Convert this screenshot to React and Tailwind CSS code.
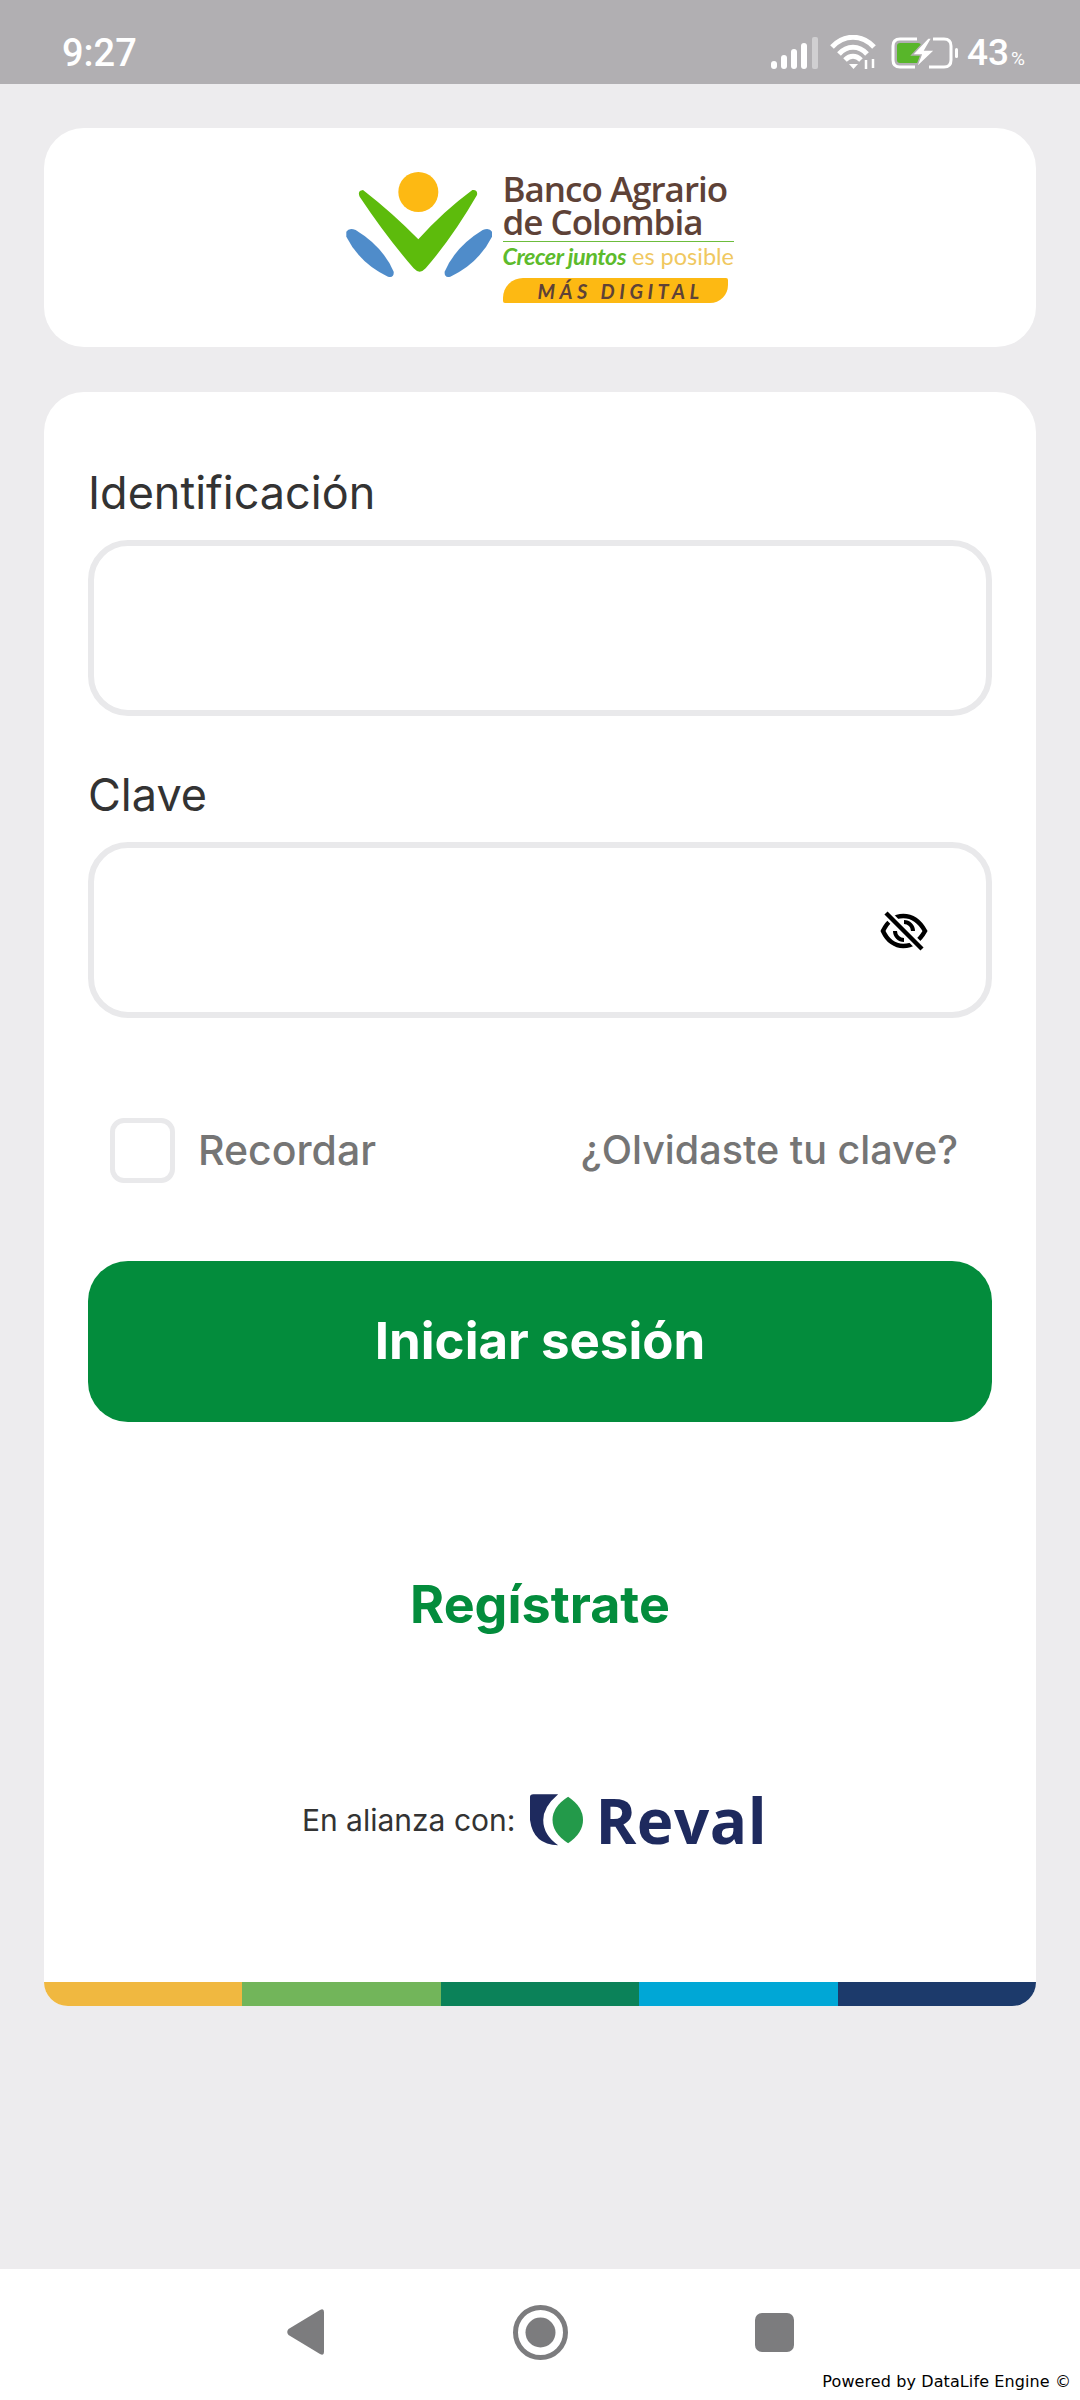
import { useState } from "react";

const STRIPES = ["bg-[#f0b840]", "bg-[#72b55a]", "bg-[#0b8259]", "bg-[#00a7d6]", "bg-[#1c3a6b]"];

function StatusIcons() {
  return (
    <div className="flex items-center">
      {/* signal */}
      <svg width="47" height="32" viewBox="0 0 47 32" fill="#fff" className="mr-[12px]">
        <rect x="0" y="24" width="6" height="8" rx="3" />
        <rect x="10" y="18" width="6" height="14" rx="3" />
        <rect x="20" y="12" width="6" height="20" rx="3" />
        <rect x="30" y="6" width="6" height="26" rx="3" />
        <rect x="41" y="0" width="6" height="32" rx="2" fill="#d0cfd1" />
      </svg>
      {/* wifi */}
      <svg width="48" height="35" viewBox="0 0 48 35" fill="none" stroke="#fff" strokeWidth="5" className="mr-[13px]">
        <path d="M2 12 C14 -1 32 -1 44 12" />
        <path d="M9 19 C17 10 29 10 37 19" />
        <path d="M15 25 C20 20 26 20 31 25" />
        <path d="M19 29 L23.500 34 L28 29 Z" fill="#fff" stroke="none" />
        <path d="M36 25 V34 M43 24 V33" strokeWidth="2.500" />
      </svg>
      {/* battery */}
      <svg width="68" height="32" viewBox="0 0 68 32" fill="none" className="mr-[8px]">
        <path d="M26 2 H9 Q2 2 2 9 V23 Q2 30 9 30 H24 M38 30 H53 Q60 30 60 23 V9 Q60 2 53 2 H42" stroke="#fff" strokeWidth="3" />
        <rect x="6" y="6" width="24" height="20" rx="3" fill="#58b62a" />
        <path d="M37 1 L21 18 H30 L25 31 L44 13 H34 L41 1 Z" fill="#fff" stroke="#b1afb2" strokeWidth="1.500" />
        <rect x="64" y="11" width="3" height="10" rx="1.500" fill="#fff" />
      </svg>
      <span className="font-['Roboto',sans-serif] font-medium text-[37px] leading-none text-white">43</span>
      <span className="font-['Roboto',sans-serif] text-[19px] leading-none text-white mt-[12px] ml-[2px]">%</span>
    </div>
  );
}

function BancoLogo() {
  return (
    <div className="flex items-start">
      <svg width="150" height="110" viewBox="70 60 450 330" className="mt-[-2px] mr-[10px]">
        <circle cx="296" cy="126" r="60" fill="#fdb913" />
        <path d="M130 120 Q220 190 296 268 Q370 185 458 120 Q475 118 472 135 Q400 260 318 355 Q300 375 282 355 Q200 260 120 140 Q112 122 130 120Z" fill="#5dbb0c" />
        <path d="M80 245 Q88 232 108 240 Q190 290 222 365 Q224 385 205 380 Q120 340 80 260Z" fill="#4f8cca" />
        <path d="M517 245 Q509 232 489 240 Q407 290 375 365 Q373 385 392 380 Q477 340 517 260Z" fill="#4f8cca" />
      </svg>
      <div className="flex flex-col w-[235px]">
        <p className="font-['Open_Sans',sans-serif] font-semibold text-[35px] leading-[33px] tracking-[-1px] text-[#5e4237] whitespace-pre-line">
          {"Banco Agrario\nde Colombia"}
        </p>
        <div className="h-[1px] bg-[#6cbd3c] mt-[3px] w-[231px]" />
        <p className="font-['Lato',sans-serif] text-[23.500px] leading-[28px] whitespace-nowrap">
          <span className="font-bold italic text-[#5dbb2c] tracking-[-0.5px]">Crecer juntos</span>{" "}
          <span className="text-[#f0c860]">es posible</span>
        </p>
        <div className="mt-[8px] w-[225px] h-[25px] bg-[#fdb913] rounded-tl-[20px] rounded-br-[18px] rounded-bl-[2px] rounded-tr-[2px] flex items-center pl-[35px]">
          <span className="font-['Lato',sans-serif] font-bold italic text-[20px] leading-none tracking-[4.500px] text-[#5e4237] whitespace-nowrap">
            MÁS DIGITAL
          </span>
        </div>
      </div>
    </div>
  );
}

function RevalLogo() {
  return (
    <div className="flex items-center">
      <svg width="53" height="52" viewBox="750 72 160 156" className="mr-[12px]">
        <path d="M750 80 Q750 72 760 72 L835 72 Q790 110 790 150 Q790 195 835 226 Q760 225 750 150 Z" fill="#1e2a5e" />
        <path d="M865 80 Q910 110 910 150 Q910 190 865 220 Q818 190 818 150 Q818 110 865 80Z" fill="#239a4a" />
      </svg>
      <span className="font-['Open_Sans',sans-serif] font-bold text-[62px] leading-none tracking-[0.5px] text-[#1e2a5e]">
        Reval
      </span>
    </div>
  );
}

export default function App() {
  const [id, setId] = useState("");
  const [clave, setClave] = useState("");
  const [recordar, setRecordar] = useState(false);

  return (
    <div className="h-[2400px] flex flex-col bg-[#edecee] font-['Inter',sans-serif] relative">
      {/* Status bar */}
      <div className="h-[84px] bg-[#b1afb2] flex items-center justify-between pl-[62px] pr-[55px] pt-[21px]">
        <span className="font-['Roboto',sans-serif] font-medium text-[38px] leading-none text-white">9:27</span>
        <StatusIcons />
      </div>

      <div className="flex-1 px-[44px] pt-[44px]">
        <div className="h-[219px] bg-white rounded-[40px] flex items-center justify-center">
          <BancoLogo />
        </div>

        <div className="mt-[45px] h-[1614px] bg-white rounded-t-[40px] rounded-b-[24px] overflow-hidden flex flex-col">
          <div className="flex-1 px-[44px] pt-[73px]">
            <label className="block h-[56px] mb-[19px] text-[45px] leading-[56px] text-[#333333]">
              Identificación
            </label>
            <input
              value={id}
              onChange={(e) => setId(e.target.value)}
              className="block w-full h-[176px] border-[6px] border-[#e9e9eb] rounded-[40px] px-8 text-[40px] outline-none"
            />

            <label className="block mt-[51px] h-[56px] mb-[19px] text-[45px] leading-[56px] text-[#333333]">
              Clave
            </label>
            <div className="relative">
              <input
                type="password"
                value={clave}
                onChange={(e) => setClave(e.target.value)}
                className="block w-full h-[176px] border-[6px] border-[#e9e9eb] rounded-[40px] px-8 text-[40px] outline-none"
              />
              <svg
                width="48"
                height="42"
                viewBox="0 0 48 42"
                fill="none"
                stroke="#000"
                strokeWidth="4.500"
                className="absolute left-[792px] top-[68px]"
              >
                <path d="M3 21 C12 1 34 1 45 21 C34 41 12 41 3 21 Z" />
                <path d="M24 12 A9 9 0 0 1 33 21 M24 30 A9 9 0 0 1 15 21" strokeWidth="4" />
                <path d="M6 3 L42 39" stroke="#fff" strokeWidth="9" />
                <path d="M6 3 L42 39" strokeWidth="4.500" />
              </svg>
            </div>

            <div className="mt-[100px] h-[65px] flex items-center justify-between pl-[22px] pr-[34px]">
              <label className="flex items-center gap-[23px]">
                <input
                  type="checkbox"
                  checked={recordar}
                  onChange={(e) => setRecordar(e.target.checked)}
                  className="appearance-none w-[65px] h-[65px] border-[5px] border-[#e9e9eb] rounded-[14px]"
                />
                <span className="text-[41px] font-medium text-[#757575]">Recordar</span>
              </label>
              <a className="text-[39.500px] font-medium text-[#757575]">¿Olvidaste tu clave?</a>
            </div>

            <button className="mt-[78px] w-full h-[161px] bg-[#038c3c] rounded-[40px] text-white font-bold text-[51px]">
              Iniciar sesión
            </button>

            <div className="mt-[153px] h-[60px] flex items-center justify-center">
              <a className="text-[52px] font-bold text-[#038c3c]">Regístrate</a>
            </div>

            <div className="mt-[155px] h-[60px] flex items-center justify-center gap-[15px] pr-[11px]">
              <span className="text-[30px] text-[#333333]">En alianza con:</span>
              <RevalLogo />
            </div>
          </div>

          <div className="h-[24px] flex">
            {STRIPES.map((c) => (
              <div key={c} className={`flex-1 ${c}`} />
            ))}
          </div>
        </div>
      </div>

      {/* Navigation bar */}
      <div className="h-[131px] bg-white flex items-center justify-center pb-[5px]">
        <div className="w-[234px] flex justify-center">
          <svg width="38" height="46" viewBox="0 0 38 46" fill="#7c7c7e">
            <path d="M1.500 20 L33 1 Q37 -1 37 3 V43 Q37 47 33 45 L1.500 26 Q-1 23 1.500 20 Z" />
          </svg>
        </div>
        <div className="w-[234px] flex justify-center">
          <svg width="55" height="55" viewBox="0 0 55 55">
            <circle cx="27.500" cy="27.500" r="25" fill="none" stroke="#7c7c7e" strokeWidth="5" />
            <circle cx="27.500" cy="27.500" r="15" fill="#7c7c7e" />
          </svg>
        </div>
        <div className="w-[234px] flex justify-center">
          <div className="w-[39px] h-[39px] rounded-[7px] bg-[#7c7c7e]" />
        </div>
      </div>

      {/* watermark sits over the nav bar */}
      <span className="absolute right-[9px] bottom-[8px] font-['DejaVu_Sans',sans-serif] text-[16px] tracking-[0.1px] leading-[20px] text-black whitespace-nowrap">
        Powered by DataLife Engine ©
      </span>
    </div>
  );
}
